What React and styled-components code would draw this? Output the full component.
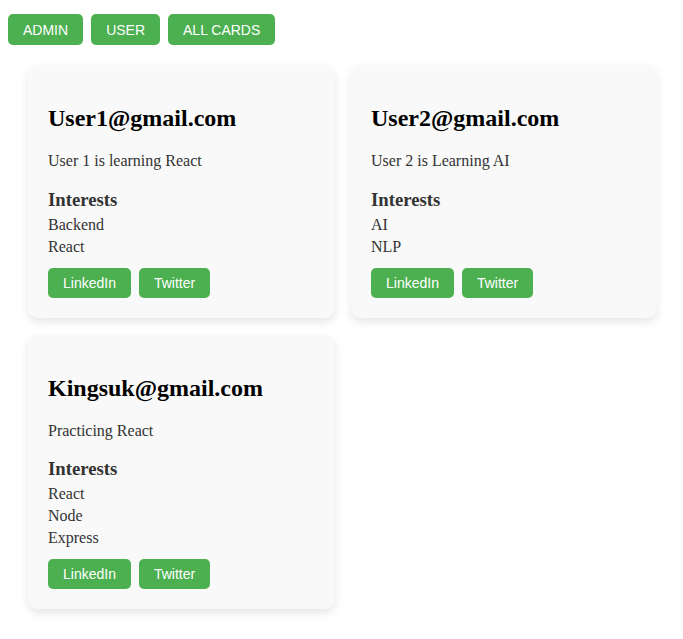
import React from 'react';
import styled, { createGlobalStyle } from 'styled-components';

const GlobalStyle = createGlobalStyle`
  body {
    margin: 8px;
    background: #fff;
    font-family: "Liberation Serif", "Times New Roman", serif;
  }
`;

const Nav = styled.nav`
  display: flex;
  gap: 8px;
  padding-top: 6px;
`;

const Button = styled.button`
  background: #4caf50;
  color: #fff;
  border: none;
  border-radius: 5px;
  font-family: "Liberation Sans", Arial, sans-serif;
  font-size: 14px;
  line-height: 16px;
  padding: ${({ small }) => (small ? '7px 15px' : '7.5px 15px')};
  cursor: pointer;
`;

const CardGrid = styled.div`
  display: grid;
  grid-template-columns: 307px 306px;
  gap: 17px 16px;
  padding: 20px 18px 20px 20px;
  align-items: start;
`;

const Card = styled.div`
  background: #f9f9f9;
  border-radius: 10px;
  padding: 20px;
  box-shadow: 0 4px 10px rgba(0, 0, 0, 0.1);
`;

const Email = styled.h2`
  font-size: 24px;
  margin: 20px 0;
  color: #000;
`;

const Description = styled.p`
  font-size: 16px;
  margin: 16px 0;
  color: #333;
`;

const InterestsTitle = styled.h3`
  font-size: 18.72px;
  margin: 18.72px 0 3px;
  color: #333;
`;

const InterestList = styled.ul`
  list-style: none;
  margin: 0;
  padding: 0;
`;

const Interest = styled.li`
  font-size: 16px;
  line-height: 22px;
  color: #333;
`;

const Links = styled.div`
  display: flex;
  gap: 8px;
  margin-top: 10px;
`;

const cards = [
  {
    email: 'User1@gmail.com',
    description: 'User 1 is learning React',
    interests: ['Backend', 'React'],
  },
  {
    email: 'User2@gmail.com',
    description: 'User 2 is Learning AI',
    interests: ['AI', 'NLP'],
  },
  {
    email: 'Kingsuk@gmail.com',
    description: 'Practicing React',
    interests: ['React', 'Node', 'Express'],
  },
];

const App = () => (
  <>
    <GlobalStyle />
    <Nav>
      <Button>ADMIN</Button>
      <Button>USER</Button>
      <Button>ALL CARDS</Button>
    </Nav>
    <CardGrid>
      {cards.map(({ email, description, interests }) => (
        <Card key={email}>
          <Email>{email}</Email>
          <Description>{description}</Description>
          <InterestsTitle>Interests</InterestsTitle>
          <InterestList>
            {interests.map(item => (
              <Interest key={item}>{item}</Interest>
            ))}
          </InterestList>
          <Links>
            <Button small>LinkedIn</Button>
            <Button small>Twitter</Button>
          </Links>
        </Card>
      ))}
    </CardGrid>
  </>
);

export default App;
